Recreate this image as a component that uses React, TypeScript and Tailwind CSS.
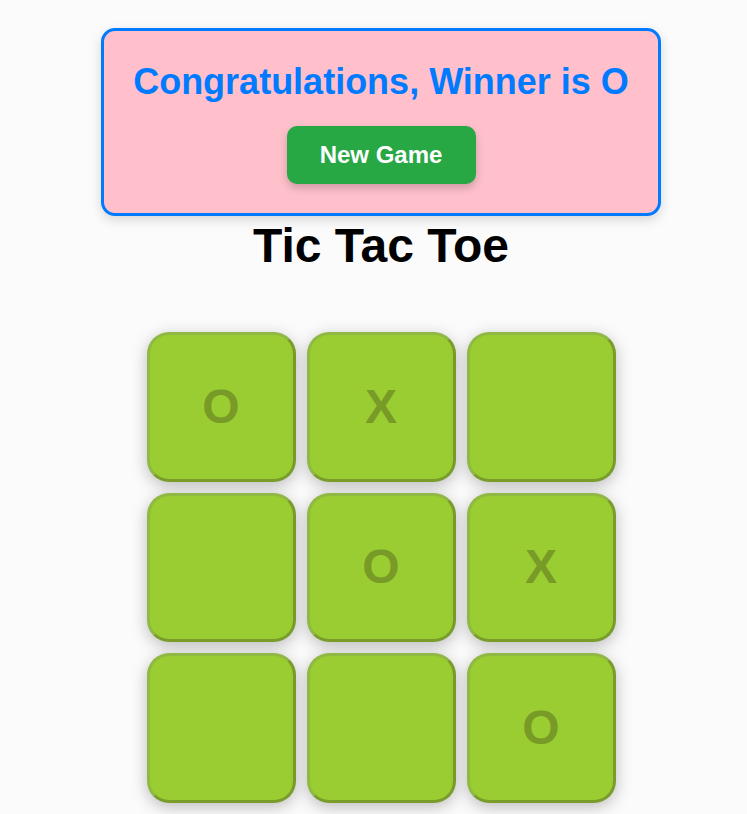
import React, { useState } from 'react';

type Cell = 'X' | 'O' | null;

// board as in the finished game
const initialBoard: Cell[] = ['O', 'X', null, null, 'O', 'X', null, null, 'O'];

export default function App() {
  const [board, setBoard] = useState<Cell[]>(initialBoard);
  const winner = 'O';

  return (
    <div className="min-h-screen bg-[#fbfbfb] pl-[15px] font-['Liberation_Sans',Arial,sans-serif]">
      <div className="flex flex-col items-center pt-[28px]">
        {/* winner banner */}
        <div className="w-[560px] h-[188px] bg-[#ffc0cb] border-[3px] border-[#007bff] rounded-[14px] shadow-[0_4px_12px_rgba(0,0,0,0.15)] flex flex-col items-center pt-[30px]">
          <h2 className="text-[36px] leading-[41px] font-bold text-[#007bff]">
            Congratulations, Winner is {winner}
          </h2>
          <button
            onClick={() => setBoard(Array(9).fill(null))}
            className="mt-[24px] w-[189px] h-[58px] rounded-[10px] bg-[#28a745] text-white text-[24px] font-bold shadow-[0_4px_8px_rgba(0,0,0,0.2)]"
          >
            New Game
          </button>
        </div>

        <h1 className="text-[48px] leading-[55px] font-bold text-black mt-[2px]">Tic Tac Toe</h1>

        {/* board */}
        <div className="grid grid-cols-[repeat(3,149px)] gap-x-[11px] gap-y-[11px] mt-[59px]">
          {board.map((cell, i) => (
            <button
              key={i}
              className="w-[149px] h-[149.5px] rounded-[22px] bg-[#9acd32] border-[3px] border-t-[#8fb944] border-l-[#8fb944] border-b-[#7a9c2a] border-r-[#7a9c2a] shadow-[0_4px_16px_rgba(0,0,0,0.25)] flex items-center justify-center text-[48px] font-bold text-[#789a26]"
            >
              {cell}
            </button>
          ))}
        </div>
      </div>
    </div>
  );
}
